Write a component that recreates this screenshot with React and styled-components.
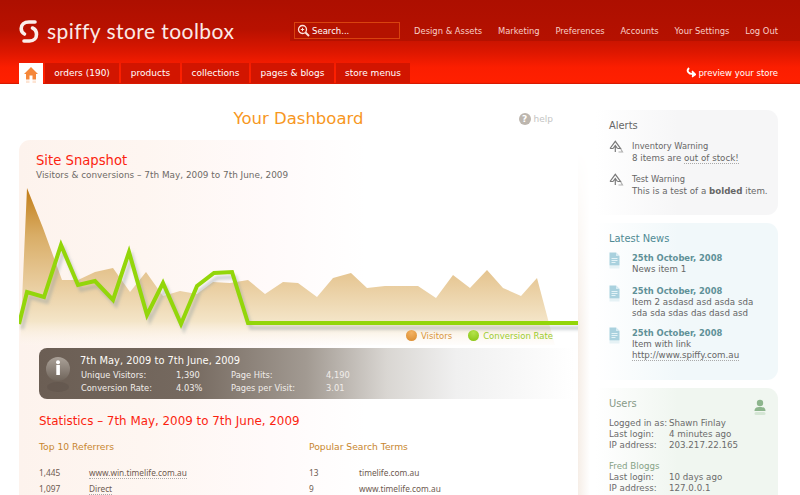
import React from "react";
import styled, { createGlobalStyle } from "styled-components";

const Global = createGlobalStyle`
  html, body { margin: 0; padding: 0; height: 495px; overflow: hidden; background: #fff; }
  body { font-family: "DejaVu Sans", sans-serif; font-size: 9.5px; color: #666; }
  * { box-sizing: border-box; }
`;

const Page = styled.div`width: 800px; height: 495px; overflow: hidden;`;
const Header = styled.header`
  height: 84px;
  background: linear-gradient(180deg, #ad0f00 0%, #b81100 35%, #dd1700 62%, #fb1e00 80%, #ff2000 98%, #c81600 100%);
  display: flex;
  flex-direction: column;
`;
const TopRow = styled.div`display: flex; height: 41px; padding-left: 19px;`;
const Brand = styled.div`flex: none; display: flex; align-items: center; gap: 8px; width: 271px; padding-top: 21px; color: #fff;`;
const BrandName = styled.span`font-family: Lato, sans-serif; font-size: 21px; letter-spacing: .45px; color: #fbe9e6; line-height: 20px; white-space: nowrap;`;
const TopBar = styled.div`
  flex: 1; display: flex; align-items: center; padding: 21px 22px 0 4px;
  background: linear-gradient(180deg, #ad0f00, #b51100);
`;
const Search = styled.div`
  flex: none; width: 106px; height: 17px; border: 1px solid #d9430f; background: #b41200; margin-top: -1px;
  display: flex; align-items: center; gap: 2px; padding-left: 2px;
  color: #fff; font-size: 8.5px;
`;
const TopNav = styled.nav`flex: 1; display: flex; justify-content: flex-end; gap: 15.8px;`;
const TopLink = styled.a`color: #f8cfc8; font-size: 8.4px; white-space: nowrap;`;
const TabRow = styled.div`display: flex; padding: 22px 22px 0 19px; height: 43px; align-items: stretch;`;
const HomeTab = styled.div`
  width: 24px; height: 21px; margin-right: 2px;
  background: #fff;
  display: flex; justify-content: center; padding-top: 4px;
`;
const Tab = styled.a`
  width: ${p => p.$w}px; height: 20px; margin-right: 2px; background: #d21500; color: #fff;
  font-size: 9px; display: flex; align-items: center; justify-content: center; white-space: nowrap;
`;
const Preview = styled.a`margin-left: auto; display: flex; align-items: center; gap: 2px; height: 19px; color: #fff; font-size: 8.5px; white-space: nowrap;`;

const Body = styled.main`display: grid; grid-template-columns: 559px 182px; column-gap: 18px; padding-left: 19px;`;
const Left = styled.div``;
const TitleRow = styled.div`display: grid; grid-template-columns: 1fr auto 1fr; align-items: center; height: 56px; padding-top: 13px; padding-right: 25px;`;
const Title = styled.h1`grid-column: 2; margin: 0; font-weight: 400; font-size: 16.5px; color: #f7971e; font-family: "DejaVu Sans", sans-serif; padding-left: 25px;`;
const Help = styled.div`grid-column: 3; justify-self: end; display: flex; align-items: center; gap: 3px; color: #c4c4c4; font-size: 9px;`;
const HelpDot = styled.span`
  width: 12px; height: 12px; border-radius: 50%; background: #bdb6ae; color: #fff; font-size: 9px; font-weight: 700;
  display: flex; align-items: center; justify-content: center;
`;
const Card = styled.section`
  position: relative; height: 400px; border-top-left-radius: 11px;
  background: linear-gradient(90deg, #fdf3ed 0, #fef6f1 22%, #fffafa 45%, #fff 62%);
  &::after {
    content: ""; position: absolute; left: 100%; top: 10px; bottom: 0; width: 12px;
    background: linear-gradient(90deg, #f6eee7, #fff);
    mask-image: linear-gradient(180deg, transparent, #000 180px);
  }
`;
const SnapHead = styled.div`padding: 12px 0 0 17px; height: 45px;`;
const SnapTitle = styled.h2`margin: 0; font-weight: 400; font-size: 13.2px; line-height: 17px; color: #fb1f10;`;
const SnapSub = styled.div`font-size: 8.9px; line-height: 13px; color: #6e6a66;`;
const ChartWrap = styled.div`position: relative; height: 163px;`;
const Chart = styled.svg`display: block;`;
const Legend = styled.div`position: absolute; right: 25px; top: 145px; display: flex; gap: 16px; font-size: 8.5px;`;
const LegendItem = styled.span`display: flex; align-items: center; gap: 4px; color: ${p => p.$c};`;
const LegendDot = styled.i`width: 11px; height: 11px; border-radius: 50%; background: radial-gradient(circle at 50% 25%, ${p => p.$a}, ${p => p.$b});`;
const InfoBar = styled.div`
  margin-left: 20px; width: 535px; height: 51px; border-radius: 8px 0 0 8px; padding: 6px 0 0 41px; position: relative; color: #fff;
  background: linear-gradient(90deg, #6b5e54 0%, #75695f 28%, #a29a92 50%, #d9d6d2 65%, #f0f0f0 78%, #fff 100%);
`;
const InfoIcon = styled.svg`position: absolute; left: 6px; top: 8px;`;
const InfoTitle = styled.div`font-size: 9.9px; line-height: 14px; color: #fdfbf8;`;
const InfoGrid = styled.div`display: grid; grid-template-columns: 95px 55px 95px auto; justify-content: start; font-size: 8.3px; line-height: 13px; margin-top: 1px; color: #f1edea; padding-left: 1px;`;
const StatsHead = styled.h2`margin: 14px 0 0 20px; font-weight: 400; font-size: 11.9px; line-height: 17px; color: #fb1f10;`;
const StatsCols = styled.div`display: grid; grid-template-columns: 270px 1fr; padding: 10px 0 0 20px;`;
const ColHead = styled.h3`margin: 0 0 12px; font-weight: 400; font-size: 9.2px; line-height: 13px; color: #c8862f;`;
const StatRow = styled.div`display: grid; grid-template-columns: 50px 1fr; height: 16px; line-height: 16px; font-family: "Noto Sans", sans-serif; font-size: 8.3px; color: #6e5a50;`;
const DotLink = styled.a`border-bottom: 1px dotted #aaa; line-height: 11px; align-self: center; justify-self: start;`;

const Side = styled.aside`padding-top: 26px; display: flex; flex-direction: column; gap: 8px;`;
const Panel = styled.section`
  height: ${p => p.$h}px; border-radius: 0 11px 11px 0; padding: 9px 10px 0 13px; position: relative;
  background: linear-gradient(90deg, #fff 0, ${p => p.$bg} 45%, ${p => p.$bg} 100%);
`;
const PanelTitle = styled.h3`margin: 0 0 ${p => p.$mb ?? 8}px; font-weight: 400; font-size: 9.9px; line-height: 13px; color: ${p => p.$c};`;
const Item = styled.div`display: grid; grid-template-columns: 23px 1fr; margin-bottom: ${p => p.$mb ?? 9}px; font-size: 8.7px; line-height: ${p => p.$lh ?? 12}px; color: #666;`;
const ItemHead = styled.div`font-size: 8.3px;`;
const ItemDate = styled.div`font-weight: 700; color: #5f9198; font-size: 8.4px; line-height: 11px; padding-top: 1px;`;
const Under = styled.span`border-bottom: 1px dotted #aaa;`;
const UserGrid = styled.div`display: grid; grid-template-columns: 60px 1fr; font-size: 8.7px; line-height: 11px; color: #6b6b6b; margin-bottom: 10px; white-space: nowrap;`;
const UserName = styled.div`grid-column: 1 / -1; color: #86a286; line-height: 11px;`;
const UserIcon = styled.svg`position: absolute; right: 12px; top: 11px;`;

const Warn = () => (
  <svg width="15" height="13" viewBox="0 0 15 13" fill="none" stroke="#7a7a7a" strokeWidth="1.2">
    <path d="M1 8.5 6.3 1.3 11.5 8.5 8.5 8.5 M1 8.5H4.2" />
    <path d="M6.3 5V12M4 8.5 6.3 5.5 8.5 8.5" />
    <path d="M9.5 12H13.5L11.8 9" stroke="#b0b0b0" />
  </svg>
);
const Doc = () => (
  <svg width="11" height="17" viewBox="0 0 11 17">
    <path d="M0.5 0.5H7L10.5 4V13.5H0.5Z" fill="#a9d1de" />
    <path d="M7 .5V4H10.5Z" fill="#d6ebf2" />
    <path d="M2.5 6.5H8.5M2.5 8.5H8.5M2.5 10.5H6.5" stroke="#e4f3f7" strokeWidth="1" />
    <rect x="0.5" y="14" width="10" height="2.5" fill="#e6f2f5" />
  </svg>
);

const areaPts = "20,345 21,323 27,188 43,228 62,280 78,280 95,272 113,268 130,292 146,272 163,296 180,291 197,294 213,282 230,283 248,280 265,294 283,282 298,283 317,297 333,278 351,273 367,288 385,286 418,286 436,298 453,275 470,288 487,270 503,288 521,296 537,278 550,327 555,345";
const linePts = "19,324 27,292 44,297 61,245 78,285 95,281 113,300 129,252 147,315 163,283 181,324 197,286 214,273 232,272 248,323 578,323";

const Tabs = [["orders (190)", 74], ["products", 59], ["collections", 67], ["pages & blogs", 83], ["store menus", 74]];

export default function App() {
  return (
    <Page>
      <Global />
      <Header>
        <TopRow>
          <Brand>
            <svg width="20" height="25" viewBox="0 0 20 25" fill="none" stroke="#fbeeea" strokeWidth="3.6" strokeLinecap="round">
              <path d="M16 3H10C5 3 2.2 6 2.2 9.5C2.2 12 3.5 14 5.5 15" />
              <path d="M13.5 9C16 10 17.5 12.5 17.5 15.5C17.5 19 15 22 10.5 22H5" />
            </svg>
            <BrandName>spiffy store toolbox</BrandName>
          </Brand>
          <TopBar>
            <Search>
              <svg width="13" height="13" viewBox="0 0 13 13" fill="none" stroke="#fbe3dc" strokeWidth="1.3">
                <circle cx="5.5" cy="5.5" r="4" />
                <path d="M8.5 8.5 12 12" strokeWidth="2" />
                <path d="M3.8 5.5H7.2M5.5 3.8V7.2" strokeWidth="1" />
              </svg>
              Search...
            </Search>
            <TopNav>
              {["Design & Assets", "Marketing", "Preferences", "Accounts", "Your Settings", "Log Out"].map(t => <TopLink key={t}>{t}</TopLink>)}
            </TopNav>
          </TopBar>
        </TopRow>
        <TabRow>
          <HomeTab>
            <svg width="14" height="16" viewBox="0 0 14 16">
              <path d="M7 0 14 7 12 7V12.5H8.5V8.5H5.5V12.5H2V7H0Z" fill="#f5873a" />
              <path d="M2 13.5H5.5V16H2ZM8.5 13.5H12V16H8.5Z" fill="#fde4d3" />
            </svg>
          </HomeTab>
          {Tabs.map(([t, w]) => <Tab key={t} $w={w}>{t}</Tab>)}
          <Preview>
            <svg width="10" height="11" viewBox="0 0 10 11" fill="none" stroke="#fff" strokeWidth="2">
              <path d="M3 1C1 3 1 5 4 6.5L8 7" />
              <path d="M6 4 9.5 7.5 6 10" strokeWidth="1.5" fill="#fff" />
            </svg>
            preview your store
          </Preview>
        </TabRow>
      </Header>
      <Body>
        <Left>
          <TitleRow>
            <Title>Your Dashboard</Title>
            <Help><HelpDot>?</HelpDot>help</Help>
          </TitleRow>
          <Card>
            <SnapHead>
              <SnapTitle>Site Snapshot</SnapTitle>
              <SnapSub>Visitors &amp; conversions – 7th May, 2009 to 7th June, 2009</SnapSub>
            </SnapHead>
            <ChartWrap>
              <Chart width="559" height="160" viewBox="19 185 559 160">
                <defs>
                  <linearGradient id="area" gradientUnits="userSpaceOnUse" x1="0" y1="188" x2="0" y2="345">
                    <stop offset="0" stopColor="#c17c16" />
                    <stop offset=".3" stopColor="#d9ad66" />
                    <stop offset=".58" stopColor="#e7c998" />
                    <stop offset=".85" stopColor="#f4e5c8" />
                    <stop offset="1" stopColor="#fdf6ee" stopOpacity="0.2" />
                  </linearGradient>
                  <filter id="blur" x="-5%" y="-20%" width="110%" height="140%"><feGaussianBlur stdDeviation="1.6" /></filter>
                </defs>
                <polygon points={areaPts} fill="url(#area)" />
                <polyline points={linePts} fill="none" stroke="#8a9aa0" strokeOpacity=".4" strokeWidth="4" transform="translate(3 5)" filter="url(#blur)" />
                <polyline points={linePts} fill="none" stroke="#93d60a" strokeWidth="4" strokeLinejoin="miter" />
              </Chart>
              <Legend>
                <LegendItem $c="#d9963c"><LegendDot $a="#f3b262" $b="#d98a2c" />Visitors</LegendItem>
                <LegendItem $c="#9ccc2f"><LegendDot $a="#b4e34a" $b="#84c20e" />Conversion Rate</LegendItem>
              </Legend>
            </ChartWrap>
            <InfoBar>
              <InfoIcon width="28" height="38" viewBox="0 0 28 38">
                <defs>
                  <linearGradient id="ball" x1="0" y1="0" x2="0" y2="1">
                    <stop offset="0" stopColor="#aaa198" />
                    <stop offset="1" stopColor="#6f645a" />
                  </linearGradient>
                </defs>
                <circle cx="13" cy="13" r="12" fill="url(#ball)" />
                <ellipse cx="13" cy="31" rx="11" ry="5" fill="#5d5249" opacity=".5" />
                <rect x="11.3" y="9" width="3.6" height="10" fill="#fff" />
                <circle cx="13" cy="6.3" r="2" fill="#fff" />
              </InfoIcon>
              <InfoTitle>7th May, 2009 to 7th June, 2009</InfoTitle>
              <InfoGrid>
                <span>Unique Visitors:</span><span>1,390</span><span>Page Hits:</span><span>4,190</span>
                <span>Conversion Rate:</span><span>4.03%</span><span>Pages per Visit:</span><span>3.01</span>
              </InfoGrid>
            </InfoBar>
            <StatsHead>Statistics – 7th May, 2009 to 7th June, 2009</StatsHead>
            <StatsCols>
              <div>
                <ColHead>Top 10 Referrers</ColHead>
                <StatRow><span>1,445</span><DotLink>www.win.timelife.com.au</DotLink></StatRow>
                <StatRow><span>1,097</span><DotLink>Direct</DotLink></StatRow>
              </div>
              <div>
                <ColHead>Popular Search Terms</ColHead>
                <StatRow><span>13</span><span>timelife.com.au</span></StatRow>
                <StatRow><span>9</span><span>www.timelife.com.au</span></StatRow>
              </div>
            </StatsCols>
          </Card>
        </Left>
        <Side>
          <Panel $h={105} $bg="#f6f6f7">
            <PanelTitle $c="#666">Alerts</PanelTitle>
            <Item><Warn /><div><ItemHead>Inventory Warning</ItemHead>8 items are <Under>out of stock!</Under></div></Item>
            <Item><Warn /><div><ItemHead>Test Warning</ItemHead>This is a test of a <b>bolded</b> item.</div></Item>
          </Panel>
          <Panel $h={157} $bg="#f1f8fa">
            <PanelTitle $c="#4f8a94" $mb={7}>Latest News</PanelTitle>
            <Item $lh={11} $mb={10}><Doc /><div><ItemDate>25th October, 2008</ItemDate>News item 1</div></Item>
            <Item $lh={11} $mb={8}><Doc /><div><ItemDate>25th October, 2008</ItemDate>Item 2 asdasd asd asda sda sda sda sdas das dasd asd</div></Item>
            <Item $lh={11}><Doc /><div><ItemDate>25th October, 2008</ItemDate>Item with link<br /><Under>http://www.spiffy.com.au</Under></div></Item>
          </Panel>
          <Panel $h={120} $bg="#f0f6f0">
            <PanelTitle $c="#889a88">Users</PanelTitle>
            <UserIcon width="12" height="17" viewBox="0 0 12 17">
              <circle cx="6" cy="4" r="3.2" fill="#8db58d" />
              <path d="M0.5 12C0.5 8.5 3 8 6 8S11.5 8.5 11.5 12Z" fill="#8db58d" />
              <rect x="0.5" y="13" width="11" height="3" rx="1.5" fill="#d5e6d5" />
            </UserIcon>
            <UserGrid>
              <span>Logged in as:</span><span>Shawn Finlay</span>
              <span>Last login:</span><span>4 minutes ago</span>
              <span>IP address:</span><span>203.217.22.165</span>
            </UserGrid>
            <UserGrid>
              <UserName>Fred Bloggs</UserName>
              <span>Last login:</span><span>10 days ago</span>
              <span>IP address:</span><span>127.0.0.1</span>
            </UserGrid>
          </Panel>
        </Side>
      </Body>
    </Page>
  );
}
